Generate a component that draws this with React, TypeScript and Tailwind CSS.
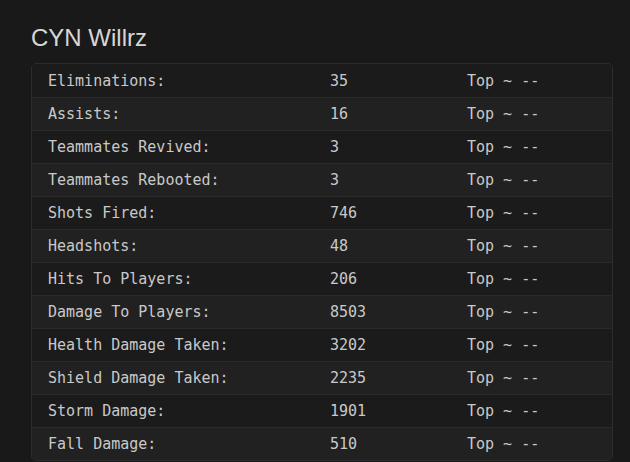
const stats = [
  { label: "Eliminations:", value: "35" },
  { label: "Assists:", value: "16" },
  { label: "Teammates Revived:", value: "3" },
  { label: "Teammates Rebooted:", value: "3" },
  { label: "Shots Fired:", value: "746" },
  { label: "Headshots:", value: "48" },
  { label: "Hits To Players:", value: "206" },
  { label: "Damage To Players:", value: "8503" },
  { label: "Health Damage Taken:", value: "3202" },
  { label: "Shield Damage Taken:", value: "2235" },
  { label: "Storm Damage:", value: "1901" },
  { label: "Fall Damage:", value: "510" },
];

export default function App() {
  return (
    <div className="min-h-[462px] w-[630px] bg-[#191919] pt-[23px] pl-[31px]">
      <h1 className="mb-[11px] font-['Liberation_Sans',Arial,sans-serif] text-[24px] leading-[29px] text-[#d6d6d6]">
        CYN Willrz
      </h1>
      <div className="w-[582px] overflow-hidden rounded-[5px] border border-[#2c2c2c] font-['DejaVu_Sans_Mono',monospace] text-[15px] text-[#c9c9c9]">
        {stats.map((s, i) => (
          <div
            key={s.label}
            className={`grid h-[33px] grid-cols-[282px_137px_1fr] items-center pt-px ${
              i > 0 ? "border-t border-[#2a2a2a]" : ""
            } ${i % 2 === 0 ? "bg-[#1b1b1b]" : "bg-[#212121]"}`}
          >
            <span className="px-4">{s.label}</span>
            <span className="px-4">{s.value}</span>
            <span className="px-4">Top ~ --</span>
          </div>
        ))}
      </div>
    </div>
  );
}
